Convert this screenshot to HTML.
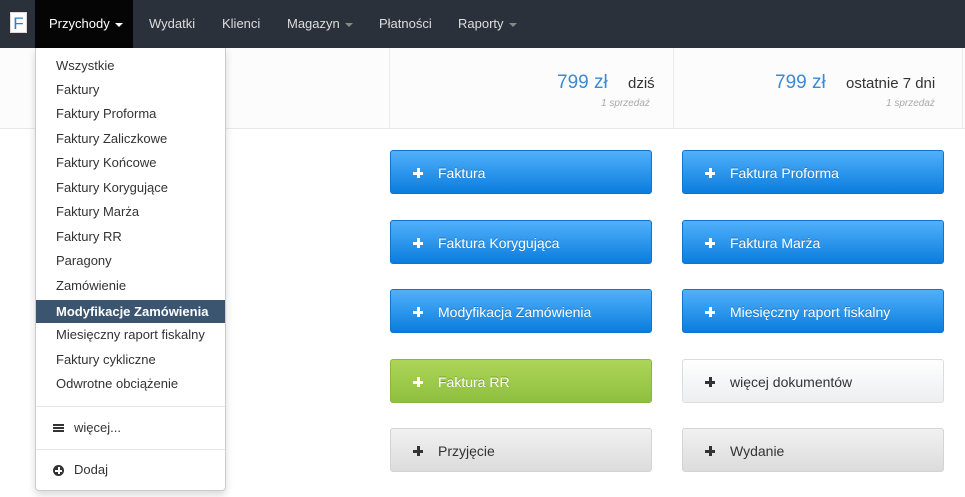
<!DOCTYPE html>
<html><head><meta charset="utf-8"><style>
*{box-sizing:border-box;margin:0;padding:0}
body{width:965px;height:497px;overflow:hidden;background:#fff;font-family:"Liberation Sans",sans-serif;position:relative;font-size:13px}
.nav{position:absolute;left:0;top:0;width:965px;height:48px;background:#2a313b}
.logo{position:absolute;left:10px;top:12px;width:17px;height:21px;background:#fff;color:#2a7fd0;font-size:17px;text-align:center;line-height:21px;border:1px solid #e6d6d6}
.ni{position:absolute;top:0;height:48px;line-height:48px;color:#ddd;font-size:13px}
.act{background:#050505;color:#fff;left:35px;width:98px;padding-left:14px}
.car{display:inline-block;border-left:4px solid transparent;border-right:4px solid transparent;border-top:4px solid currentColor;vertical-align:middle;margin-left:5px}
.stats{position:absolute;left:0;top:48px;width:965px;height:81px;background:#fcfcfd;border-bottom:1px solid #e6e8ea}
.dv{position:absolute;top:48px;width:1px;height:80px;background:#e8eaec}
.amt{position:absolute;color:#3a8ad6;font-size:19px}
.lbl{position:absolute;color:#333;font-size:15px}
.sm{position:absolute;color:#aaa;font-size:10px;font-style:italic}
.btn{position:absolute;width:262px;height:44px;border-radius:3px;line-height:44px;padding-left:47px;font-size:14px;color:#fff;text-shadow:0 -1px 0 rgba(0,0,0,.25)}
.btn:before{content:"";position:absolute;left:22px;top:17px;width:10px;height:10px;background:linear-gradient(currentColor,currentColor) center/10px 3px no-repeat,linear-gradient(currentColor,currentColor) center/3px 10px no-repeat}
.b{background:linear-gradient(#51b0fb,#0a7ddd);border:1px solid #0f75cc}
.g{background:linear-gradient(#add558,#8fbf3f);border:1px solid #8ab83c}
.w{background:linear-gradient(#fff,#eceef0);border:1px solid #ddd;color:#333;text-shadow:none}
.gr{background:linear-gradient(#f1f1f1,#dcdcdc);border:1px solid #d4d4d4;color:#333;text-shadow:none}
.dd{position:absolute;left:35px;top:48px;width:191px;height:443px;background:#fff;border:1px solid #ccc;border-top:none;border-radius:0 0 4px 4px;box-shadow:0 4px 8px rgba(0,0,0,.15)}
.it{position:absolute;left:0;width:189px;height:24px;line-height:24px;padding-left:20px;color:#333;font-size:13px}
.hl{background:#3b5570;color:#fff;font-weight:bold}
.hr{position:absolute;left:0;width:189px;height:1px;background:#e5e5e5}
</style></head><body>
<div class="nav">
<div class="logo">F</div>
<div class="ni act">Przychody<span class="car"></span></div>
<div class="ni" style="left:149px">Wydatki</div>
<div class="ni" style="left:222px">Klienci</div>
<div class="ni" style="left:287px">Magazyn<span class="car" style="color:#888"></span></div>
<div class="ni" style="left:379px">Płatności</div>
<div class="ni" style="left:458px">Raporty<span class="car" style="color:#888"></span></div>
</div>
<div class="stats"></div>
<div class="dv" style="left:389px"></div><div class="dv" style="left:673px"></div><div class="dv" style="left:962px"></div>
<div class="amt" style="left:557px;top:72px">799 zł</div><div class="lbl" style="left:628px;top:75px">dziś</div>
<div class="sm" style="left:601px;top:98px">1 sprzedaż</div>
<div class="amt" style="left:775px;top:72px">799 zł</div><div class="lbl" style="left:846px;top:75px">ostatnie 7 dni</div>
<div class="sm" style="left:886px;top:98px">1 sprzedaż</div>

<div class="btn b" style="left:390px;top:150px">Faktura</div>
<div class="btn b" style="left:682px;top:150px">Faktura Proforma</div>
<div class="btn b" style="left:390px;top:220px">Faktura Korygująca</div>
<div class="btn b" style="left:682px;top:220px">Faktura Marża</div>
<div class="btn b" style="left:390px;top:289px">Modyfikacja Zamówienia</div>
<div class="btn b" style="left:682px;top:289px">Miesięczny raport fiskalny</div>
<div class="btn g" style="left:390px;top:359px">Faktura RR</div>
<div class="btn w" style="left:682px;top:359px">więcej dokumentów</div>
<div class="btn gr" style="left:390px;top:428px">Przyjęcie</div>
<div class="btn gr" style="left:682px;top:428px">Wydanie</div>

<div class="dd">
<div class="it" style="top:6px">Wszystkie</div>
<div class="it" style="top:30px">Faktury</div>
<div class="it" style="top:54px">Faktury Proforma</div>
<div class="it" style="top:79px">Faktury Zaliczkowe</div>
<div class="it" style="top:103px">Faktury Końcowe</div>
<div class="it" style="top:128px">Faktury Korygujące</div>
<div class="it" style="top:152px">Faktury Marża</div>
<div class="it" style="top:177px">Faktury RR</div>
<div class="it" style="top:201px">Paragony</div>
<div class="it" style="top:226px">Zamówienie</div>
<div class="it hl" style="top:252px;height:23px;line-height:23px">Modyfikacje Zamówienia</div>
<div class="it" style="top:275px">Miesięczny raport fiskalny</div>
<div class="it" style="top:300px">Faktury cykliczne</div>
<div class="it" style="top:324px">Odwrotne obciążenie</div>
<div class="hr" style="top:358px"></div>
<div class="it" style="top:368px;padding-left:38px">więcej...</div>
<div style="position:absolute;left:17px;top:376px;width:11px;height:2px;background:#333;box-shadow:0 3px 0 #333,0 6px 0 #333"></div>
<div class="hr" style="top:401px"></div>
<div class="it" style="top:410px;padding-left:38px">Dodaj</div>
<div style="position:absolute;left:17px;top:417px;width:11px;height:11px;border-radius:50%;background:#333"></div>
<div style="position:absolute;left:19px;top:421.5px;width:7px;height:2px;background:#fff"></div>
<div style="position:absolute;left:21.5px;top:419px;width:2px;height:7px;background:#fff"></div>
</div>
</body></html>
